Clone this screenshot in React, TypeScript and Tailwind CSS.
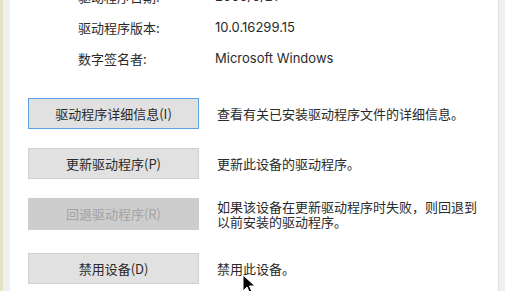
const INFO = [
  { label: '驱动程序日期:', value: '2006/6/21' },
  { label: '驱动程序版本:', value: '10.0.16299.15' },
  { label: '数字签名者:', value: 'Microsoft Windows' },
]

const ACTIONS = [
  { label: '驱动程序详细信息(I)', desc: ['查看有关已安装驱动程序文件的详细信息。'], focused: true, mt: 'mt-[24px]' },
  { label: '更新驱动程序(P)', desc: ['更新此设备的驱动程序。'], mt: 'mt-[19px]' },
  { label: '回退驱动程序(R)', desc: ['如果该设备在更新驱动程序时失败，则回退到', '以前安装的驱动程序。'], disabled: true, mt: 'mt-[19px]' },
  { label: '禁用设备(D)', desc: ['禁用此设备。'], mt: 'mt-[23px]' },
]

function Cursor() {
  return (
    <svg className="absolute left-[242px] top-[274px]" width="14" height="21" viewBox="0 0 14 21">
      <path d="M1 1 L1 17 L5 13 L8 20 L10.5 19 L7.5 12 L13 12 Z" fill="#000" stroke="#fff" strokeWidth="1" />
    </svg>
  )
}

export default function App() {
  return (
    <div className="relative w-[505px] h-[291px] overflow-hidden flex bg-white text-[#2a2a2a] font-['Noto_Sans_CJK_SC','Noto_Sans',sans-serif] text-[13px]">
      {/* background window edge */}
      <div className="w-[3px] bg-[#e4e2c4]" />
      <div className="w-[7px] bg-[#f0f0f0]" />

      {/* dialog page */}
      <div className="flex-1 pl-[18px]">
        <div className="-mt-[19px]">
          {INFO.map((row) => (
            <div key={row.label} className="h-[31px] flex items-center">
              <span className="ml-[50px] w-[137px]">{row.label}</span>
              <span className="font-['Inter','Noto_Sans',sans-serif] text-[13px]">{row.value}</span>
            </div>
          ))}
        </div>

        {ACTIONS.map((a) => (
          <div key={a.label} className={`flex items-center ${a.mt}`}>
            <div
              className={
                a.focused
                  ? 'w-[171px] h-[31px] flex items-center justify-center bg-[#e1e1e1] border border-[#5fa2e2]'
                  : a.disabled
                    ? 'w-[171px] h-[32px] flex items-center justify-center bg-[#cdcdcd] border border-[#cdcdcd] text-[#a3a3a3]'
                    : 'w-[171px] h-[31px] flex items-center justify-center bg-[#e1e1e1] border border-[#cfcfcf]'
              }
            >
              {a.label}
            </div>
            <div className="ml-[18px] leading-[15px]">
              {a.desc.map((d) => (
                <div key={d}>{d}</div>
              ))}
            </div>
          </div>
        ))}
      </div>

      <div className="w-[7px] bg-[#efefef] border-l border-[#e2e2e2]" />
      <Cursor />
    </div>
  )
}
